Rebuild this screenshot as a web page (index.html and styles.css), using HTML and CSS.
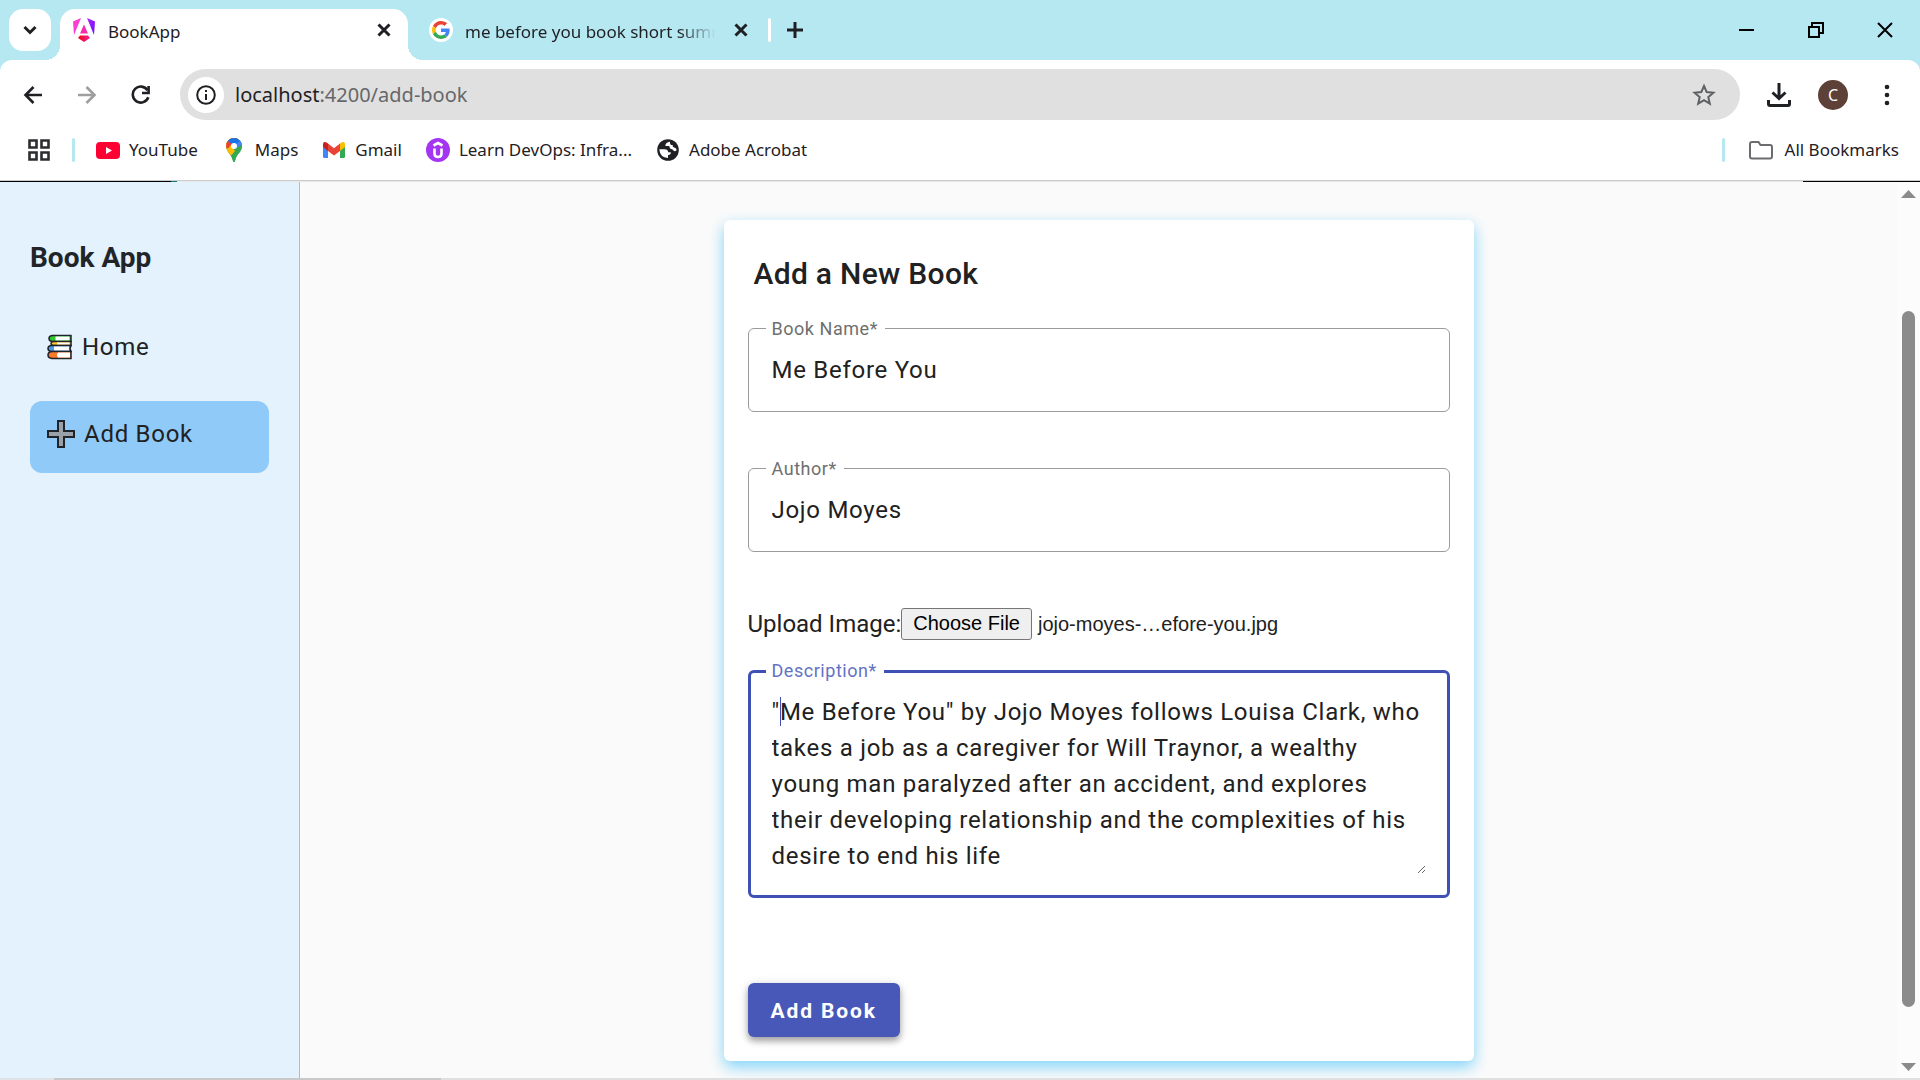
FILE: index.html
```html
<!DOCTYPE html>
<html lang="en">
<head>
<meta charset="utf-8">
<meta name="viewport" content="width=device-width, initial-scale=1">
<title>BookApp</title>
<link rel="stylesheet" href="styles.css">
</head>
<body>
<div class="window">
  <header class="browser">
    <div class="tab-strip">
      <button class="tab-search" type="button" aria-label="Search tabs">
        <svg width="14" height="10" viewBox="0 0 14 10" fill="none" stroke="#1f2024" stroke-width="3"><path d="M1.500 2l5.500 5.500L12.500 2"/></svg>
      </button>
      <div class="tab tab-active">
        <svg class="favicon" width="24" height="26" viewBox="0 0 24 26">
          <defs>
            <linearGradient id="ngLeft" x1="0" y1="0" x2="1" y2="1"><stop offset="0" stop-color="#ff41c8"/><stop offset="1" stop-color="#f637e3"/></linearGradient>
            <linearGradient id="ngRight" x1="0" y1="0" x2="1" y2="1"><stop offset="0" stop-color="#b026ff"/><stop offset="1" stop-color="#6a0cf5"/></linearGradient>
            <linearGradient id="ngBase" x1="0" y1="0" x2="1" y2="0"><stop offset="0" stop-color="#f0060b"/><stop offset="1" stop-color="#f01fa8"/></linearGradient>
          </defs>
          <path d="M9 1L1 4.500l1 13.500z" fill="url(#ngLeft)"/>
          <path d="M15 1l8 3.500-1 13.500z" fill="url(#ngRight)"/>
          <path d="M12 7.500l4 9H8z" fill="#f52bb0"/>
          <path d="M8 18.500h8l2 2.500-6 4-6-4z" fill="url(#ngBase)"/>
        </svg>
        <span class="tab-title">BookApp</span>
        <button class="tab-close" type="button" aria-label="Close tab"><svg width="14" height="14" viewBox="0 0 14 14" stroke="#1f2024" stroke-width="3"><path d="M1.500 1.500l11 11M12.500 1.500l-11 11"/></svg></button>
      </div>
      <div class="tab tab-idle">
        <span class="google-badge">
          <svg width="18" height="18" viewBox="0 0 48 48"><path fill="#EA4335" d="M24 9.500c3.540 0 6.710 1.220 9.210 3.600l6.850-6.850C35.900 2.380 30.470 0 24 0 14.620 0 6.510 5.380 2.560 13.220l7.980 6.190C12.430 13.720 17.740 9.500 24 9.500z"/><path fill="#4285F4" d="M46.980 24.550c0-1.570-.15-3.090-.38-4.550H24v9.020h12.940c-.58 2.960-2.260 5.480-4.780 7.180l7.730 6c4.510-4.180 7.090-10.360 7.090-17.650z"/><path fill="#FBBC05" d="M10.530 28.590c-.48-1.450-.76-2.990-.76-4.590s.27-3.140.76-4.590l-7.980-6.190C.92 16.460 0 20.120 0 24c0 3.880.92 7.540 2.560 10.780l7.970-6.190z"/><path fill="#34A853" d="M24 48c6.480 0 11.930-2.130 15.890-5.810l-7.730-6c-2.150 1.450-4.920 2.300-8.160 2.300-6.260 0-11.570-4.220-13.470-9.910l-7.980 6.190C6.510 42.620 14.620 48 24 48z"/></svg>
        </span>
        <span class="tab-title tab-title-fade">me before you book short summary</span>
        <button class="tab-close" type="button" aria-label="Close tab"><svg width="14" height="14" viewBox="0 0 14 14" stroke="#1f2024" stroke-width="3"><path d="M1.500 1.500l11 11M12.500 1.500l-11 11"/></svg></button>
      </div>
      <span class="tab-divider"></span>
      <button class="new-tab" type="button" aria-label="New tab"><svg width="16" height="16" viewBox="0 0 16 16" stroke="#1f2024" stroke-width="3"><path d="M8 0v16M0 8h16"/></svg></button>
      <div class="window-controls">
        <button type="button" aria-label="Minimize"><svg width="16" height="16" viewBox="0 0 16 16"><path d="M0 7h15v2H0z"/></svg></button>
        <button type="button" aria-label="Restore"><svg width="16" height="16" viewBox="0 0 16 16" fill="none" stroke="#000" stroke-width="2"><path d="M1 5h10v10H1zM4 5V1h11v10h-4"/></svg></button>
        <button type="button" aria-label="Close"><svg width="16" height="16" viewBox="0 0 16 16" stroke="#000" stroke-width="2"><path d="M1 1l14 14M15 1L1 15"/></svg></button>
      </div>
    </div>

    <div class="toolbar">
      <nav class="history" aria-label="History">
        <button type="button" aria-label="Back"><svg width="20" height="18" viewBox="0 0 20 18" fill="none" stroke="#1f2024" stroke-width="2.600"><path d="M19 9H3M10.500 1L2.500 9l8 8"/></svg></button>
        <button type="button" aria-label="Forward"><svg width="20" height="18" viewBox="0 0 20 18" fill="none" stroke="#9e9e9e" stroke-width="2.600"><path d="M1 9h16M9.500 1l8 8-8 8"/></svg></button>
        <button type="button" aria-label="Reload"><svg width="20" height="20" viewBox="0 0 20 20" fill="none" stroke="#1f2024" stroke-width="2.600"><path d="M17.300 12.300A8 8 0 1 1 16.500 5.200"/><path d="M17.600 1v7H11"/></svg></button>
      </nav>
      <div class="omnibox">
        <button class="site-info" type="button" aria-label="Site information"><svg width="20" height="20" viewBox="0 0 20 20" fill="none" stroke="#1f2024" stroke-width="2"><circle cx="10" cy="10" r="8.800"/><path d="M10 9v6M10 5v2"/></svg></button>
        <span class="url">localhost<span class="url-path">:4200/add-book</span></span>
        <button class="star" type="button" aria-label="Bookmark this tab"><svg width="24" height="24" viewBox="0 0 24 24" fill="none" stroke="#5f6063" stroke-width="2"><path d="M12 3l2.700 6.100 6.700.6-5.100 4.400 1.500 6.500-5.800-3.400-5.800 3.400 1.500-6.500-5.100-4.400 6.700-.6z"/></svg></button>
      </div>
      <button class="tool" type="button" aria-label="Downloads"><svg width="24" height="24" viewBox="0 0 24 24" fill="none" stroke="#1f2024" stroke-width="3"><path d="M12 0v15M5.500 9.500L12 15.500l6.500-6M1.500 17v4q0 1.500 1.500 1.500h18q1.500 0 1.500-1.500v-4"/></svg></button>
      <button class="avatar" type="button" aria-label="Profile">C</button>
      <button class="tool tool-menu" type="button" aria-label="Menu"><svg width="6" height="22" viewBox="0 0 6 22" fill="#1f2024"><circle cx="3" cy="3" r="2.300"/><circle cx="3" cy="11" r="2.300"/><circle cx="3" cy="19" r="2.300"/></svg></button>
    </div>

    <nav class="bookmarks" aria-label="Bookmarks">
      <button class="apps" type="button" aria-label="Apps"><svg width="22" height="22" viewBox="0 0 22 22" fill="none" stroke="#2c2d30" stroke-width="2.600"><path d="M1.500 1.500h7v7h-7zM13.500 1.500h7v7h-7zM1.500 13.500h7v7h-7zM13.500 13.500h7v7h-7z"/></svg></button>
      <span class="divider"></span>
      <div class="bookmark-list">
        <a href="#youtube"><svg width="24" height="24" viewBox="0 0 24 24"><rect y="4" width="24" height="17" rx="4" fill="#f03"/><path d="M10 9l6 3.500-6 3.500z" fill="#fff"/></svg>YouTube</a>
        <a href="#maps"><svg width="24" height="24" viewBox="0 0 24 24"><defs><clipPath id="pin"><path d="M12 0a8 8 0 0 0-8 8c0 6 5.500 7.500 7 15 .3 1.300 1.700 1.300 2 0 1.500-7.500 7-9 7-15a8 8 0 0 0-8-8z"/></clipPath></defs><g clip-path="url(#pin)"><path d="M0 0h24v24H0z" fill="#34a853"/><path d="M0 0h20L4 19z" fill="#fbbc04"/><path d="M0 0h16l-9 11-5-2z" fill="#ea4335"/><path d="M5 2l7-3 10 0v4L12 8z" fill="#1a73e8"/><path d="M12 8l8-7v7l-8 8z" fill="#4285f4"/><path d="M20 6.500V24H8l-1-8.500 5-4z" fill="#34a853"/><path d="M4 13l5-6 4 6-6 7z" fill="#fbbc04"/></g><circle cx="12" cy="8" r="3" fill="#fff"/></svg>Maps</a>
        <a href="#gmail"><svg width="24" height="24" viewBox="0 0 24 24"><path d="M1 6v12.500q0 1.500 1.500 1.500H6V9z" fill="#4285f4"/><path d="M23 6v12.500q0 1.500-1.500 1.500H18V9z" fill="#34a853"/><path d="M18 5.500l2-1.200q3-1 3 2V9l-5 4z" fill="#fbbc04"/><path d="M6 5.500L4 4.300q-3-1-3 2V9l5 4z" fill="#c5221f"/><path d="M6 5.500l6 4.700 6-4.700V13l-6 4.500L6 13z" fill="#ea4335"/></svg>Gmail</a>
        <a href="#devops"><svg width="24" height="24" viewBox="0 0 24 24"><circle cx="12" cy="12" r="12" fill="#a435f0"/><path d="M7.500 7.500L12 5l4.500 2.500M8.500 10.500v5q0 3.500 3.500 3.500t3.500-3.500v-5" fill="none" stroke="#fff" stroke-width="2.600"/></svg>Learn DevOps: Infra...</a>
        <a href="#acrobat"><svg width="24" height="24" viewBox="0 0 24 24"><circle cx="12" cy="12" r="10.800" fill="#202124"/><path d="M3.300 11.300h5.200q3.500 0 3.700 3h2.500q.8 2-2.700 3v2.700q-8-.2-8.700-8.700z" fill="#fff"/><path d="M14 3.700q-4.500.5-4.700 4.300h4q.2 3 3.200 3.500l1.500 1.500q2 .5 2.700-1-.5-2.500-2.500-2.500-2-.5-1.500-2.500-3 .5-2.700-3.300z" fill="#fff"/></svg>Adobe Acrobat</a>
      </div>
      <span class="divider divider-end"></span>
      <a class="all-bookmarks" href="#all"><svg width="24" height="20" viewBox="0 0 24 20" fill="none" stroke="#6b6c6f" stroke-width="2"><path d="M3 2h6.500l2 3H21q2 0 2 2v9.500q0 2-2 2H3q-2 0-2-2V4q0-2 2-2z"/></svg>All Bookmarks</a>
    </nav>
    <div class="load-edge"></div>
  </header>

  <div class="page">
    <aside class="sidebar">
      <h2 class="brand">Book App</h2>
      <nav class="menu" aria-label="Main">
        <a class="menu-item" href="#home">
          <svg width="26" height="26" viewBox="0 0 26 26" stroke="#20242a" stroke-width="1.500"><path d="M5 1.500h19v6H5q-3-.5-3-3t3-3z" fill="#2fc62f"/><path d="M8.500 2.500h14v4h-14z" fill="#fff" stroke="none"/><path d="M6 7.500h18v4H6q-2-.5-2-2t2-2z" fill="#ffc32b"/><path d="M10 8.500h12.500v2H10z" fill="#fff" stroke="none"/><path d="M4 11.500h20l-1 3 1 3H4q-3-.5-3-3t3-3z" fill="#4a9ce8"/><path d="M7 12.500h15v4H7z" fill="#fff" stroke="none"/><path d="M5 17.500h19v7H5q-4-.5-4-3.500t4-3.500z" fill="#f97a28"/><path d="M11 18.500h12v5H11q-2-2.500 0-5z" fill="#fff" stroke="none"/></svg>
          Home
        </a>
        <a class="menu-item menu-item-active" href="#add-book">
          <svg width="28" height="28" viewBox="0 0 28 28"><path d="M11 1h6v10h10v6H17v10h-6V17H1v-6h10z" fill="#9aa1a8" stroke="#20242a" stroke-width="2"/></svg>
          Add Book
        </a>
      </nav>
    </aside>

    <main class="content">
      <form class="card">
        <h1 class="card-title">Add a New Book</h1>
        <div class="field">
          <label for="name">Book Name*</label>
          <input id="name" type="text" value="Me Before You">
        </div>
        <div class="field">
          <label for="author">Author*</label>
          <input id="author" type="text" value="Jojo Moyes">
        </div>
        <div class="upload">
          <label for="image">Upload Image:</label>
          <input class="file-input" id="image" type="file" accept="image/*" tabindex="-1">
          <button class="file-button" type="button">Choose File</button>
          <output class="file-name" for="image">jojo-moyes-…efore-you.jpg</output>
        </div>
        <div class="field field-focused">
          <label for="description">Description*</label>
          <textarea id="description" rows="5">"Me Before You" by Jojo Moyes follows Louisa Clark, who takes a job as a caregiver for Will Traynor, a wealthy young man paralyzed after an accident, and explores their developing relationship and the complexities of his desire to end his life</textarea>
          <span class="caret"></span>
        </div>
        <button class="submit" type="submit">Add Book</button>
      </form>
    </main>

    <div class="scrollbar" aria-hidden="true">
      <svg width="15" height="8" viewBox="0 0 15 8" fill="#8b8b8b"><path d="M0 8L7.500 0 15 8z"/></svg>
      <div class="track"><div class="thumb"></div></div>
      <svg width="15" height="8" viewBox="0 0 15 8" fill="#8b8b8b"><path d="M0 0h15L7.500 8z"/></svg>
    </div>
  </div>
  <div class="bottom-edge"></div>
</div>
</body>
</html>
```
FILE: styles.css
```css
* {
  box-sizing: border-box;
}

body {
  margin: 0;
  font-family: Roboto, "Liberation Sans", sans-serif;
  color: #212121;
}

button {
  margin: 0;
  padding: 0;
  border: 0;
  background: none;
  font: inherit;
  color: inherit;
}

svg {
  display: block;
  flex: none;
}

a {
  color: inherit;
  text-decoration: none;
}

.window {
  display: flex;
  flex-direction: column;
  height: 100vh;
  overflow: hidden;
}

/* Browser frame */
.browser {
  flex: none;
  background: #b6e8f2;
  font-family: "Noto Sans", "Open Sans", sans-serif;
  font-size: 17px;
  color: #1f2024;
}

.tab-strip {
  display: flex;
  align-items: center;
  height: 60px;
  padding-left: 9px;
}

.tab-search {
  display: grid;
  place-items: center;
  width: 42px;
  height: 42px;
  border-radius: 14px;
  background: #fff;
}

.tab {
  display: flex;
  align-items: center;
  height: 51px;
  align-self: flex-end;
  padding-bottom: 9px;
}

.tab-active {
  position: relative;
  width: 348px;
  margin-left: 9px;
  padding-left: 12px;
  padding-right: 17px;
  gap: 12px;
  border-radius: 15px 15px 0 0;
  background: #fff;
}

.tab-active::before,
.tab-active::after {
  content: "";
  position: absolute;
  bottom: 0;
  width: 15px;
  height: 15px;
}

.tab-active::before {
  right: 100%;
  background: radial-gradient(circle at 0 0, transparent 15px, #fff 15px);
}

.tab-active::after {
  left: 100%;
  background: radial-gradient(circle at 100% 0, transparent 15px, #fff 15px);
}

.tab-idle {
  width: 360px;
  padding-left: 21px;
  padding-right: 20px;
  gap: 12px;
}

.google-badge {
  display: grid;
  place-items: center;
  flex: none;
  width: 24px;
  height: 24px;
  border-radius: 50%;
  background: #fff;
}

.tab-title {
  flex: 1;
  padding-top: 3px;
  line-height: 24px;
  white-space: nowrap;
  overflow: hidden;
}

.tab-title-fade {
  margin-right: 6px;
  mask-image: linear-gradient(to right, #000 85%, transparent);
}

.tab-divider {
  width: 3px;
  height: 24px;
  border-radius: 2px;
  background: #fff;
}

.new-tab {
  margin-left: 16px;
}

.window-controls {
  display: flex;
  gap: 53px;
  margin-left: auto;
  padding-right: 27px;
}

.toolbar {
  display: flex;
  align-items: center;
  height: 69px;
  padding: 0 30px 0 23px;
  border-radius: 12px 12px 0 0;
  background: #fff;
}

.history {
  display: flex;
  align-items: center;
  gap: 34px;
}

.omnibox {
  display: flex;
  align-items: center;
  flex: 1;
  height: 51px;
  margin-left: 29px;
  margin-right: 27px;
  padding: 0 24px 0 8px;
  border-radius: 26px;
  background: #e0e0e0;
}

.site-info {
  display: grid;
  place-items: center;
  width: 36px;
  height: 36px;
  border-radius: 50%;
  background: #fff;
}

.url {
  flex: 1;
  margin-left: 11px;
  font-size: 20px;
}

.url-path {
  color: #66676a;
}

.avatar {
  width: 30px;
  height: 30px;
  margin: 0 36px 0 27px;
  border-radius: 50%;
  background: #5d4037;
  color: #fff;
  font-size: 16px;
}

.bookmarks {
  display: flex;
  align-items: center;
  height: 51px;
  padding: 0 21px 10px 28px;
  background: #fff;
  white-space: nowrap;
}

.bookmarks a {
  display: flex;
  align-items: center;
  gap: 9px;
}

.divider {
  width: 3px;
  height: 24px;
  margin: 0 21px 0 22px;
  border-radius: 2px;
  background: #b6e8f2;
}

.divider-end {
  margin: 0 24px 0 auto;
}

.bookmark-list {
  display: flex;
  gap: 24px;
}

.bookmarks .all-bookmarks {
  gap: 12px;
}

.load-edge {
  height: 2px;
  border-top: 1px solid #ccc;
  background: linear-gradient(to right, #000 171px, #0b7f86 171px, #0b7f86 177px, #e8e8e8 177px, #e8e8e8 calc(100% - 117px), #000 calc(100% - 117px));
}

/* Application */
.page {
  display: flex;
  flex: 1;
  min-height: 0;
  background: #fafafa;
}

.sidebar {
  flex: none;
  width: 300px;
  padding: 55px 30px 0;
  border-right: 1px solid #a9bfcf;
  background: #e3f2fd;
}

.brand {
  margin: 0 0 35px;
  font-size: 28px;
  line-height: 42px;
  color: #212529;
}

.menu {
  display: flex;
  flex-direction: column;
  gap: 15px;
}

.menu-item {
  display: flex;
  align-items: center;
  gap: 9px;
  height: 72px;
  padding: 0 17px 6px;
  border-radius: 12px;
  font-size: 24px;
  letter-spacing: 0.03em;
}

.menu-item-active {
  background: #90caf9;
}

.content {
  flex: 1;
  padding: 38px 24px 0;
  overflow: hidden;
}

.card {
  display: flex;
  flex-direction: column;
  max-width: 750px;
  margin: 0 auto;
  padding: 30px 24px 24px;
  border-radius: 6px;
  background: #fff;
  box-shadow: 0 6px 15px #81d4fa;
}

.card-title {
  margin: 0 6px 30px;
  font-size: 30px;
  font-weight: 500;
  line-height: 48px;
  letter-spacing: 0.01em;
}

.field {
  position: relative;
  margin-bottom: 56px;
  border: 1px solid #9b9b9b;
  border-radius: 6px;
  font-size: 24px;
  letter-spacing: 0.03em;
}

.field label {
  position: absolute;
  top: -12px;
  left: 17px;
  padding: 0 7px 0 6px;
  background: #fff;
  color: #6f6f6f;
  font-size: 18px;
  line-height: 24px;
  letter-spacing: 0.03em;
}

.field input,
.field textarea {
  display: block;
  width: 100%;
  border: 0;
  outline: 0;
  background: none;
  color: inherit;
  font: inherit;
  letter-spacing: inherit;
}

.field input {
  height: 82px;
  padding: 0 23px;
}

.upload {
  display: flex;
  align-items: center;
  margin-bottom: 30px;
  font-size: 24px;
  line-height: 32px;
}

.upload label {
  padding-bottom: 3px;
  margin-bottom: -3px;
  line-height: 29px;
}

.file-input {
  position: absolute;
  width: 1px;
  height: 1px;
  opacity: 0;
}

.file-button {
  height: 32px;
  padding: 0 11px 2px;
  border: 1px solid #767676;
  border-radius: 3px;
  background: #efefef;
  color: #000;
  font: 20px "Liberation Sans", sans-serif;
}

.file-name {
  margin-left: 6px;
  font: 20px "Liberation Sans", sans-serif;
}

.field-focused {
  margin-bottom: 85px;
  padding: 21px;
  border: 3px solid #3f51b5;
}

.field-focused label {
  top: -14px;
  left: 15px;
  color: #6472c4;
}

.field textarea {
  height: 180px;
  padding: 0;
  line-height: 36px;
  resize: vertical;
}

.caret {
  position: absolute;
  top: 24px;
  left: 29px;
  width: 1px;
  height: 29px;
  background: #3f51b5;
}

.submit {
  align-self: flex-start;
  height: 54px;
  padding: 2px 23px 0;
  border-radius: 6px;
  background: #4758b8;
  box-shadow: 0 4px 6px rgba(0, 0, 0, 0.3), 0 2px 12px rgba(0, 0, 0, 0.14);
  color: #fff;
  font-size: 21px;
  font-weight: 700;
  letter-spacing: 0.09em;
}

.scrollbar {
  display: flex;
  flex: none;
  flex-direction: column;
  align-items: center;
  width: 23px;
  padding: 8px 0 7px;
  background: #fcfcfc;
}

.track {
  flex: 1;
  width: 13px;
  padding: 113px 0 56px;
}

.thumb {
  height: 100%;
  border-radius: 7px;
  background: #8b8b8b;
}

.bottom-edge {
  flex: none;
  height: 2px;
  background: linear-gradient(to right, #dfe3e6 54px, #c9c9c9 54px, #c9c9c9 441px, #e0e0e0 441px);
}
```
